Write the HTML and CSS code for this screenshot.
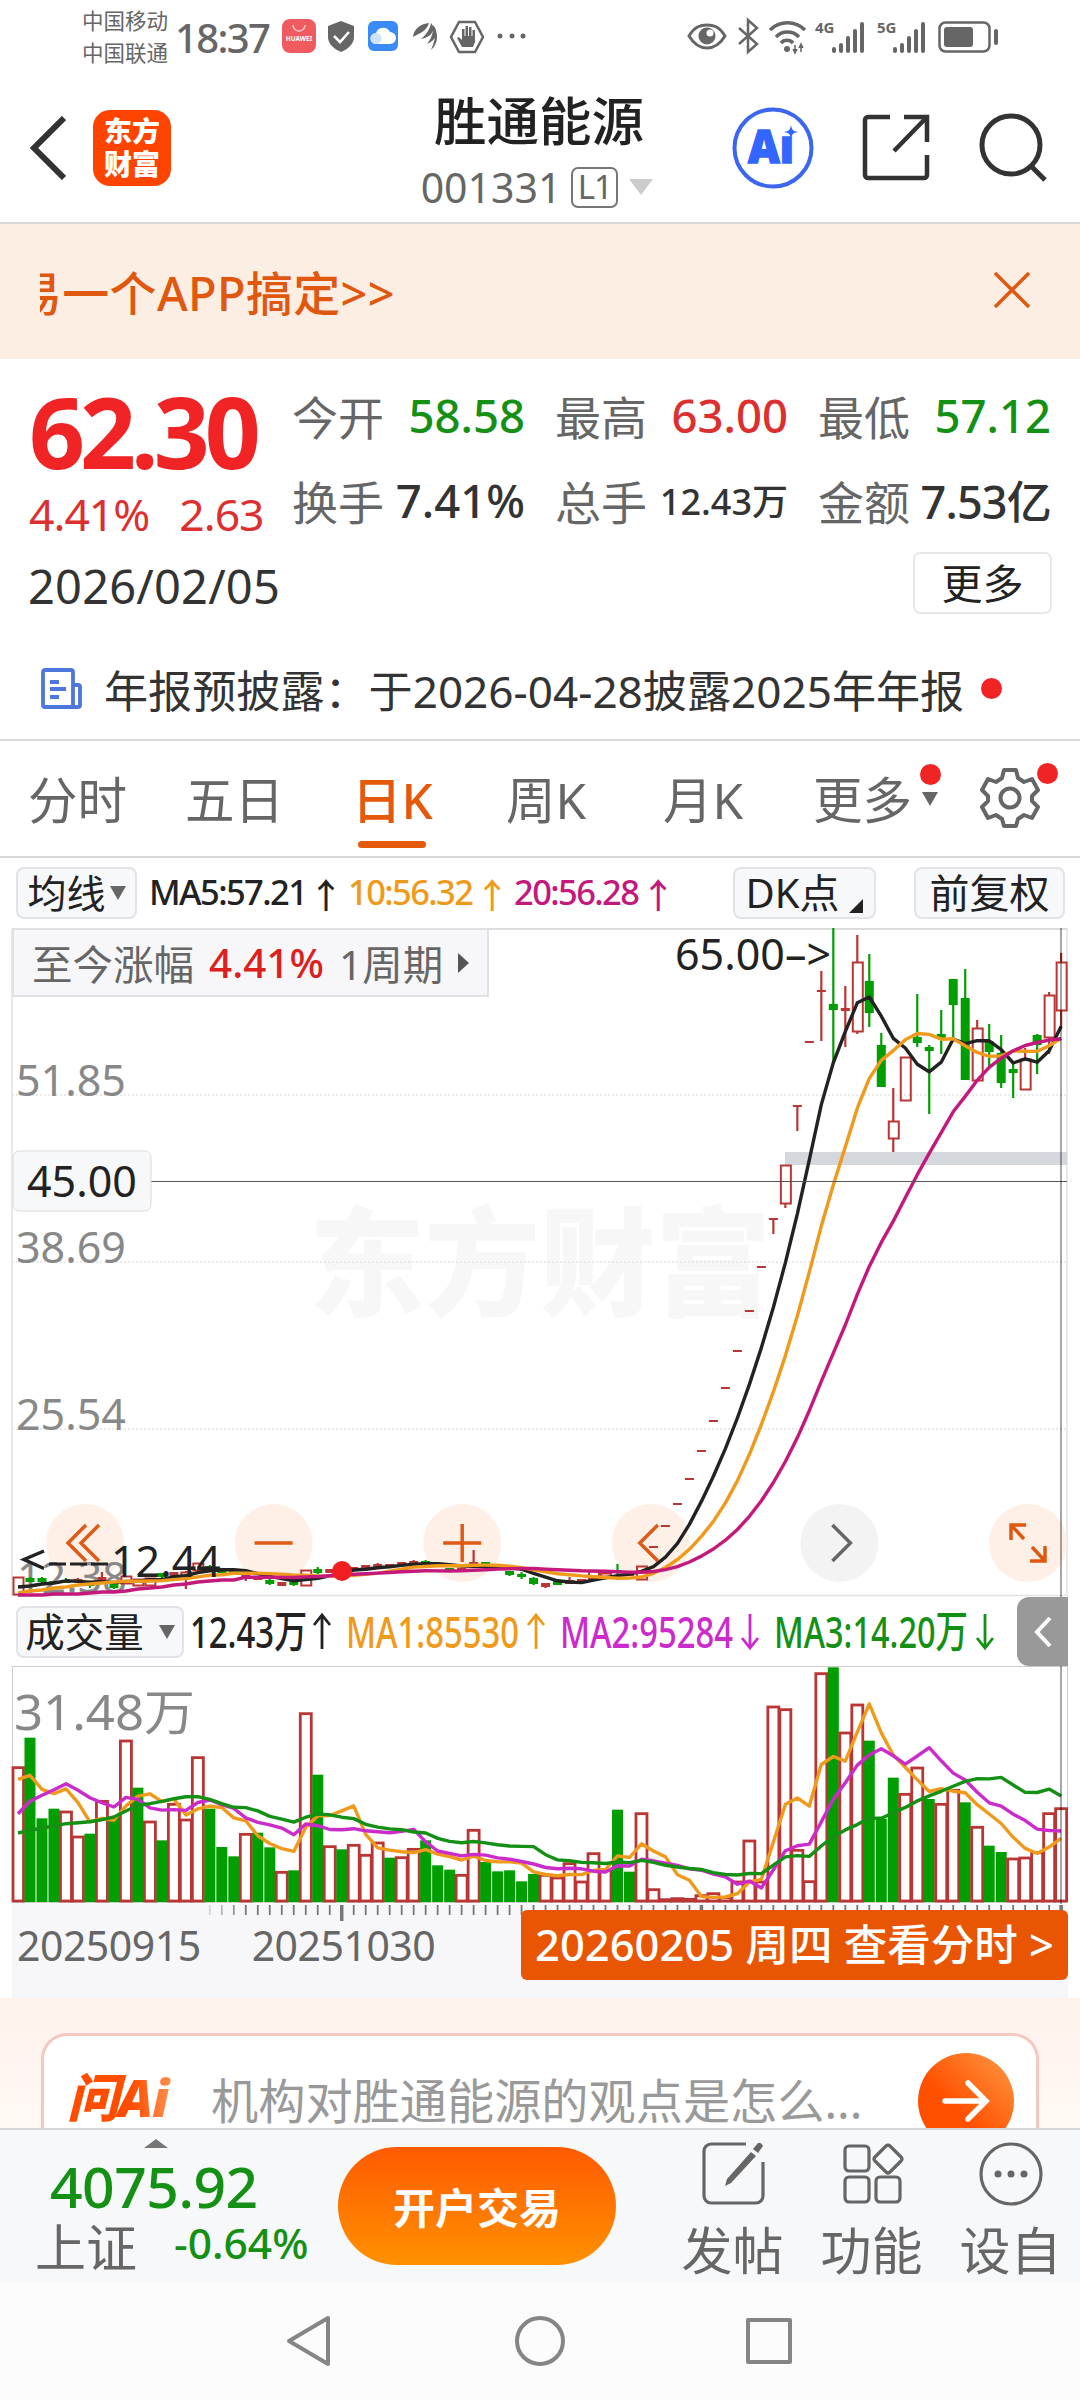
FILE: index.html
```html
<!DOCTYPE html>
<html lang="zh-CN">

<head>
    <meta charset="UTF-8" />
    <meta name="viewport" content="width=device-width, initial-scale=1.0" />
    <title>胜通能源 001331</title>
    <link rel="stylesheet" href="styles.css">
</head>

<body>
    <!-- 状态栏 -->
    <div class="status">
        <div class="carrier">
            <p>中国移动</p>
            <p>中国联通</p>
        </div>
        <span class="time">18:37</span>
        <svg class="status-left" width="250" height="40" viewBox="0 0 250 40">
            <rect x="3" y="3" width="34" height="34" rx="8" fill="#ef5b5f" />
            <path d="M14 9a6 6 0 0 0 12 0" fill="none" stroke="#fbc5c5" stroke-width="1.5" />
            <text x="20" y="25" font-size="6.5" font-weight="700" fill="#fff" text-anchor="middle">HUAWEI</text>
            <path d="M62 5l13 5v11c0 7-6 12-13 15-7-3-13-8-13-15V10z" fill="#666" />
            <path d="M55 20l6 6 9-10" fill="none" stroke="#fff" stroke-width="2.6" />
            <rect x="89" y="5" width="30" height="30" rx="6" fill="#3a8bf7" />
            <path d="M97 28a5.500 5.500 0 0 1 0-11 7.500 7.500 0 0 1 14-1 6 6 0 0 1 0 12z" fill="#fff" />
            <circle cx="97" cy="22.500" r="5.500" fill="#cfe2fd" />
            <path d="M134 21c1-9 8-13 16-14-2 7-8 10-16 14zM142 23c5-4 9-10 10-16 5 5 2 14-10 16zM148 28c4-5 7-12 6-19 6 6 4 15-6 19zM152 34c3-7 5-14 4-21 4 7 2 16-4 21z" fill="#666" />
            <path d="M180 6h16l8 15-8 15h-16l-8-15z" fill="none" stroke="#666" stroke-width="2.500" />
            <path d="M183 31l-5-9 2-1 3 3V13h2.500v7h1V10h2.500v10h1V11h2.500v9h1v-6h2.500v12l-2 5z" fill="#666" />
            <g fill="#666">
                <circle cx="221" cy="20" r="2.500" />
                <circle cx="233" cy="20" r="2.500" />
                <circle cx="244" cy="20" r="2.500" />
            </g>
        </svg>
        <svg class="status-right" width="314" height="40" viewBox="0 0 314 40">
            <g fill="none" stroke="#666" stroke-width="3">
                <path d="M3 20C9 10 15 9 21 9s12 1 18 11C33 30 27 32 21 32S9 30 3 20z" />
                <path d="M53 12l18 16-9 8V4l9 8-18 16" stroke-width="2.500" />
                <path d="M84 14a25 25 0 0 1 35 0M90 21a16 16 0 0 1 23 0M95 27a8 8 0 0 1 12 0" stroke-width="3.500" />
                <rect x="253.500" y="6.500" width="50" height="29" rx="6" stroke-width="2.500" />
            </g>
            <circle cx="21" cy="20" r="8.500" fill="#666" />
            <circle cx="24" cy="17" r="3.500" fill="#fff" />
            <circle cx="101" cy="33" r="3" fill="#666" />
            <path d="M109 29v8M115 28v8M107 33l2 4 2-4M113 32l2-4 2 4" stroke="#666" stroke-width="1.500" fill="#666" />
            <text x="129" y="17" class="net">4G</text>
            <text x="191" y="17" class="net">5G</text>
            <g fill="#666">
                <rect x="146" y="31" width="4" height="6" rx="2" />
                <rect x="153" y="27" width="4" height="10" rx="2" />
                <rect x="160" y="20" width="4" height="17" rx="2" />
                <rect x="167" y="13" width="4" height="24" rx="2" />
                <rect x="174" y="6" width="4" height="31" rx="2" />
                <rect x="207" y="31" width="4" height="6" rx="2" />
                <rect x="214" y="27" width="4" height="10" rx="2" />
                <rect x="221" y="20" width="4" height="17" rx="2" />
                <rect x="228" y="13" width="4" height="24" rx="2" />
                <rect x="235" y="6" width="4" height="31" rx="2" />
                <rect x="258" y="11" width="29" height="20" rx="3" />
                <rect x="308" y="13" width="4" height="16" rx="2" />
            </g>
        </svg>
    </div>

    <!-- 顶部标题 -->
    <header class="header">
        <div class="header-left">
            <svg width="36" height="64" viewBox="0 0 36 64">
                <path d="M34 2L4 32l30 30" fill="none" stroke="#333" stroke-width="6" />
            </svg>
            <div class="logo">东方<br>财富</div>
        </div>
        <div class="header-title">
            <h1>胜通能源</h1>
            <div class="code">001331<span class="level">L1</span><i class="arrow"></i></div>
        </div>
        <div class="header-right">
            <svg width="82" height="82" viewBox="0 0 82 82">
                <circle cx="41" cy="41" r="38.500" fill="none" stroke="#3c66ef" stroke-width="4" />
                <text x="16" y="56" class="ai-text" textLength="46" lengthAdjust="spacingAndGlyphs">Aı</text>
                <path d="M59 18c1 5 2 6 7 7-5 1-6 2-7 7-1-5-2-6-7-7 5-1 6-2 7-7z" fill="#3366ff" />
            </svg>
            <svg width="68" height="68" viewBox="0 0 68 68">
                <path d="M28 3H6a3 3 0 0 0-3 3v55a3 3 0 0 0 3 3h56a3 3 0 0 0 3-3V41M42 3h23v25M65 3L32 37" fill="none" stroke="#333" stroke-width="4.500" />
            </svg>
            <svg width="70" height="70" viewBox="0 0 70 70">
                <circle cx="33" cy="32" r="29" fill="none" stroke="#333" stroke-width="5" />
                <path d="M53 53l14 14" stroke="#333" stroke-width="5" />
            </svg>
        </div>
    </header>

    <div class="banner">
        <div class="banner-text"><p>易一个APP搞定&gt;&gt;</p></div>
        <svg width="38" height="38" viewBox="0 0 38 38">
            <path d="M2 2l34 34M36 2L2 36" stroke="#e0580f" stroke-width="3.500" />
        </svg>
    </div>

    <!-- 行情 -->
    <section class="quote">
        <div class="quote-main">
            <div class="price">62.30</div>
            <div class="change"><span>4.41%</span><span>2.63</span></div>
        </div>
        <ul class="quote-list">
            <li><em>今开</em><b class="down">58.58</b></li>
            <li><em>最高</em><b class="up">63.00</b></li>
            <li><em>最低</em><b class="down">57.12</b></li>
            <li><em>换手</em><b>7.41%</b></li>
            <li><em>总手</em><b class="small">12.43万</b></li>
            <li><em>金额</em><b class="tight">7.53亿</b></li>
        </ul>
    </section>
    <div class="date-row">
        <span>2026/02/05</span>
        <button class="more">更多</button>
    </div>
    <div class="notice">
        <svg width="42" height="42" viewBox="0 0 42 42">
            <g fill="none" stroke="#4d77dd" stroke-width="3.800">
                <path d="M32 39H4a2 2 0 0 1-2-2V4a2 2 0 0 1 2-2h26a2 2 0 0 1 2 2v35h5a2 2 0 0 0 2-2V19a2 2 0 0 0-2-2h-5" />
                <path d="M9 14h9M9 21h16M9 29h9" />
            </g>
        </svg>
        <p>年报预披露：于2026-04-28披露2025年年报</p>
        <i class="dot"></i>
    </div>

    <nav class="tabs">
        <span>分时</span>
        <span>五日</span>
        <span class="active">日K</span>
        <span>周K</span>
        <span>月K</span>
        <span class="tab-more">更多<i class="dot"></i><i class="arrow"></i></span>
        <span class="tab-set">
            <svg width="60" height="62" viewBox="0 0 60 62">
                <path d="M24 3h12l2 8 6 4 8-3 6 11-6 6v5l6 6-6 11-8-3-6 4-2 7H24l-2-7-6-4-8 3-6-11 6-6v-5l-6-6 6-11 8 3 6-4z" fill="none" stroke="#666" stroke-width="4" stroke-linejoin="round" />
                <circle cx="30" cy="31" r="9.500" fill="none" stroke="#666" stroke-width="4" />
            </svg>
            <i class="dot"></i>
        </span>
    </nav>

    <div class="ma-bar">
        <button class="chip chip-ma">均线<i class="arrow"></i></button>
        <p class="ma-list">
            <span class="ma5">MA5:57.21<i>↑</i></span>
            <span class="ma10">10:56.32<i>↑</i></span>
            <span class="ma20">20:56.28<i>↑</i></span>
        </p>
        <button class="chip chip-dk">DK点<i class="corner"></i></button>
        <button class="chip chip-fq">前复权</button>
    </div>

    <!-- K线图 -->
    <div class="kline">
        <svg id="kline" width="1080" height="669" viewBox="0 0 1080 669"></svg>
        <div class="range-tip">至今涨幅 <b>4.41%</b> 1周期<i></i></div>
    </div>

    <div class="vol-bar">
        <button class="chip chip-vol">成交量<i class="arrow"></i></button>
        <svg class="vol-legend" width="820" height="70" viewBox="0 0 820 70">
            <g font-size="44" font-weight="500">
                <text x="1" y="51" textLength="117" lengthAdjust="spacingAndGlyphs" fill="#222">12.43万</text>
                <text x="157" y="51" textLength="173" lengthAdjust="spacingAndGlyphs" fill="#f09a1c">MA1:85530</text>
                <text x="371" y="51" textLength="173" lengthAdjust="spacingAndGlyphs" fill="#cc2bcc">MA2:95284</text>
                <text x="585" y="51" textLength="194" lengthAdjust="spacingAndGlyphs" fill="#149014">MA3:14.20万</text>
            </g>
            <g fill="none" stroke-width="2.800">
                <path d="M133 52V18M125 28l8-10 8 10" stroke="#222" />
                <path d="M347 52V18M339 28l8-10 8 10" stroke="#f09a1c" />
                <path d="M561 17v34M553 41l8 10 8-10" stroke="#cc2bcc" />
                <path d="M796 17v34M788 41l8 10 8-10" stroke="#149014" />
            </g>
        </svg>
        <span class="handle">
            <svg width="20" height="34" viewBox="0 0 20 34">
                <path d="M17 3L4 17l13 14" fill="none" stroke="#fff" stroke-width="4" />
            </svg>
        </span>
    </div>

    <!-- 成交量图 -->
    <svg id="volume" width="1080" height="238" viewBox="0 0 1080 238"></svg>
    <div class="axis">
        <svg id="ticks" width="1056" height="20" viewBox="12 0 1056 20"></svg>
        <div class="axis-dates">
            <span>20250915</span>
            <span>20251030</span>
        </div>
        <div class="axis-tag">20260205 周四 查看分时 &gt;</div>
    </div>

    <section class="ask">
        <div class="ask-card">
            <span class="ask-logo">问Ai</span>
            <p>机构对胜通能源的观点是怎么...</p>
            <span class="ask-go">
                <svg width="50" height="44" viewBox="0 0 50 44">
                    <path d="M4 22h40M27 4l18 18-18 18" fill="none" stroke="#fff" stroke-width="5.500" stroke-linecap="round" />
                </svg>
            </span>
        </div>
    </section>

    <footer class="footer">
        <div class="index">
            <i class="arrow-up"></i>
            <div class="index-num">4075.92</div>
            <div class="index-name"><span>上证</span><b>-0.64%</b></div>
        </div>
        <button class="open">开户交易</button>
        <ul class="tools">
            <li>
                <svg width="64" height="66" viewBox="0 0 64 66">
                    <path d="M45 4H10a7 7 0 0 0-7 7v45a7 7 0 0 0 7 7h45a7 7 0 0 0 7-7V22" fill="none" stroke="#666" stroke-width="3.200" />
                    <path d="M52 9l5-6q3-1 5 3l-5 7zM50 12l5 4-25 27-6 3 2-7z" fill="#666" />
                </svg>
                <span>发帖</span>
            </li>
            <li>
                <svg width="64" height="66" viewBox="0 0 64 66">
                    <g fill="none" stroke="#666" stroke-width="3.200">
                        <rect x="5" y="6" width="24" height="25" rx="4" />
                        <rect x="5" y="37" width="24" height="25" rx="4" />
                        <rect x="36" y="37" width="24" height="25" rx="4" />
                        <path d="M46 6q2-2 4 0l11 11q2 2 0 4L50 32q-2 2-4 0L35 21q-2-2 0-4z" />
                    </g>
                </svg>
                <span>功能</span>
            </li>
            <li>
                <svg width="64" height="66" viewBox="0 0 64 66">
                    <circle cx="32" cy="34" r="30" fill="none" stroke="#666" stroke-width="3.200" />
                    <g fill="#666">
                        <circle cx="19" cy="34" r="3.500" />
                        <circle cx="32" cy="34" r="3.500" />
                        <circle cx="45" cy="34" r="3.500" />
                    </g>
                </svg>
                <span>设自</span>
            </li>
        </ul>
    </footer>

    <div class="sysnav">
        <svg width="560" height="60" viewBox="260 0 560 60">
            <g fill="none" stroke="#858585" stroke-width="4" stroke-linejoin="round">
                <path d="M328 7v46L289 30z" />
                <circle cx="540" cy="30" r="23" />
                <rect x="748" y="9" width="42" height="42" />
            </g>
        </svg>
    </div>

    <script>
        const RED = '#b93634'
        const GREEN = '#009e00'
        const STEP = 11.99
        const X0 = 18

        // [最高, 实体上沿, 实体下沿, 最低, 阳线, 成交量, 量柱颜色]
        const data = [
            [649, 649, 666, 666, 1, 403, 1], [649, 651, 653, 654, 0, 493, 0], [649, 651, 653, 655, 0, 251, 0], [653, 654, 655, 656, 0, 280, 0],
            [650, 653, 654, 655, 0, 270, 1], [650, 652, 653, 654, 1, 195, 1], [655, 656, 657, 660, 0, 205, 0], [644, 650, 652, 653, 1, 302, 1],
            [654, 655, 660, 661, 0, 255, 0], [648, 648, 655, 655, 1, 483, 1], [651, 651, 657, 657, 1, 343, 0], [650, 650, 657, 657, 1, 240, 1],
            [645, 645, 649, 650, 0, 185, 0], [645, 645, 647, 648, 1, 293, 1], [643, 644, 648, 661, 1, 246, 1], [635, 635, 642, 642, 1, 433, 1],
            [637, 639, 641, 642, 0, 280, 0], [641, 642, 644, 645, 0, 165, 0], [644, 644, 645, 646, 0, 137, 0], [648, 648, 649, 653, 1, 203, 1],
            [650, 650, 651, 652, 1, 208, 0], [651, 653, 655, 657, 0, 164, 0], [655, 655, 657, 658, 1, 89, 1], [654, 655, 656, 658, 0, 95, 0],
            [642, 642, 657, 657, 1, 565, 1], [639, 642, 644, 646, 0, 382, 0], [641, 642, 644, 645, 1, 166, 1], [641, 642, 643, 645, 1, 158, 0],
            [640, 640, 641, 642, 1, 170, 1], [638, 638, 639, 640, 1, 140, 1], [635, 637, 638, 639, 1, 177, 1], [637, 637, 638, 639, 1, 133, 0],
            [635, 635, 637, 637, 1, 133, 1], [632, 634, 635, 636, 1, 158, 1], [632, 634, 636, 637, 0, 185, 0], [636, 636, 637, 638, 0, 110, 0],
            [640, 641, 642, 643, 0, 97, 0], [640, 641, 642, 642, 1, 80, 1], [622, 635, 637, 637, 1, 215, 1], [635, 635, 637, 638, 0, 120, 0],
            [636, 637, 638, 639, 0, 92, 0], [643, 643, 647, 648, 0, 95, 0], [644, 646, 649, 651, 0, 62, 0], [649, 650, 656, 657, 0, 84, 0],
            [655, 656, 658, 660, 1, 80, 1], [654, 654, 656, 656, 0, 72, 1], [649, 653, 655, 655, 1, 115, 1], [652, 652, 654, 655, 1, 60, 1],
            [643, 643, 650, 650, 1, 145, 1], [645, 645, 648, 649, 1, 95, 1], [636, 642, 645, 647, 0, 277, 0], [646, 646, 647, 648, 1, 91, 0],
            [638, 638, 651, 652, 1, 265, 1], [619, 619, 619, 619, 1, 37, 1], [598, 598, 598, 598, 1, 7, 1], [576, 576, 576, 576, 1, 10, 1],
            [551, 551, 551, 551, 1, 8, 1], [523, 523, 523, 523, 1, 19, 1], [493, 493, 493, 493, 1, 25, 1], [460, 460, 460, 460, 1, 13, 1],
            [423, 423, 423, 423, 1, 60, 1], [383, 383, 383, 383, 1, 183, 1], [339, 339, 339, 339, 1, 60, 1], [291, 291, 291, 306, 1, 585, 1],
            [237, 237, 275, 280, 1, 577, 1], [178, 178, 178, 203, 1, 155, 1], [114, 114, 114, 114, 1, 61, 1], [43, 63, 63, 113, 1, 685, 1],
            [0, 76, 82, 135, 0, 704, 0], [58, 81, 82, 119, 1, 507, 1], [7, 34, 103, 106, 1, 591, 1], [26, 53, 85, 99, 0, 484, 0],
            [105, 117, 159, 159, 0, 250, 0], [160, 193, 210, 224, 1, 373, 0], [129, 129, 172, 172, 1, 323, 1], [66, 109, 115, 119, 0, 402, 1],
            [117, 119, 123, 186, 0, 309, 0], [82, 106, 111, 126, 0, 293, 1], [51, 51, 77, 112, 0, 335, 1], [41, 70, 152, 152, 0, 299, 0],
            [92, 100, 152, 152, 1, 224, 1], [96, 113, 124, 139, 0, 169, 0], [107, 125, 155, 160, 0, 150, 0], [134, 142, 144, 170, 0, 129, 1],
            [120, 131, 161, 161, 1, 132, 1], [106, 107, 117, 146, 0, 148, 1], [64, 67, 109, 126, 1, 265, 1], [25, 34, 82, 99, 1, 280, 1]
        ]

        const x = i => X0 + STEP * i

        // head: 窗口期之前的均线值
        function average(list, n, head) {
            return list.map((v, i) => {
                if (i < head.length) return head[i]
                const part = list.slice(i - n + 1, i + 1)
                return part.reduce((a, b) => a + b, 0) / n
            })
        }

        function line(values, toY, color) {
            const points = values.map((v, i) => `${x(i).toFixed(1)},${toY(v).toFixed(1)}`).join(' ')
            return `<polyline points="${points}" fill="none" stroke="${color}" stroke-width="3.4" stroke-linejoin="round" />`
        }

        function drawKline() {
            let html = '<text x="309" y="379" textLength="462" lengthAdjust="spacingAndGlyphs" class="watermark">东方财富</text>'
            html += '<path d="M12 .5V667.5H1067V.5" fill="none" stroke="#e2e2e2" stroke-width="1.500" /><path d="M12 1H1067" stroke="#dcdcdc" stroke-width="2" />'
            for (const y of [167, 334, 501]) {
                html += `<path d="M12 ${y}H1067" stroke="#e4e4e4" stroke-width="1.500" stroke-dasharray="2 2" />`
            }
            html += '<rect x="785" y="224" width="282" height="13" fill="#d4d7dc" />'

            // 底部操作按钮
            const icons = [
                ['#fff0e7', '#dd5b16', 'M1-18l-18 18 18 18M14-18l-18 18 18 18'],
                ['#fff0e7', '#dd5b16', 'M-19 0h38'],
                ['#fff0e7', '#dd5b16', 'M-19 0h38M0-19v38'],
                ['#fff0e7', '#dd5b16', 'M7-18l-18 18 18 18'],
                ['#f3f3f3', '#666', 'M-7-18l18 18-18 18'],
                ['#fff0e7', '#e0580f', 'M-17-3v-15h15M-17-18l13 14M17 3v15h-15M17 18l-13-14']
            ]
            icons.forEach((item, i) => {
                html += `<g transform="translate(${85 + 188.6 * i} 615)"><circle r="39" fill="${item[0]}" /><path d="${item[2]}" fill="none" stroke="${item[1]}" stroke-width="3.500" /></g>`
            })

            html += '<text x="16" y="168" class="scale">51.85</text><text x="16" y="335" class="scale">38.69</text>'
            html += '<text x="16" y="502" class="scale">25.54</text><text x="17" y="665" class="scale">12.38</text>'

            data.forEach(([high, top, bottom, low, up], i) => {
                const color = up ? RED : GREEN
                const cx = x(i)
                html += `<path d="M${cx} ${high}V${top}M${cx} ${bottom}V${low}" stroke="${color}" stroke-width="2.200" />`
                if (bottom - top < 3) {
                    html += `<path d="M${cx - 4.5} ${(top + bottom) / 2}h9" stroke="${color}" stroke-width="${bottom - top + 2}" />`
                } else if (up) {
                    html += `<rect x="${cx - 4.5}" y="${top + .5}" width="10" height="${bottom - top}" fill="none" stroke="${color}" stroke-width="2" />`
                } else {
                    html += `<rect x="${cx - 4.5}" y="${top}" width="9" height="${bottom - top}" fill="${color}" />`
                }
            })

            const close = data.map(d => d[4] ? d[1] : d[2])
            const same = v => v
            html += line(average(close, 5, [659, 658, 656, 655]), same, '#222')
            html += line(average(close, 10, [665, 663, 662, 660, 659, 657, 656, 655, 654]), same, '#f09a1c')
            html += line(average(close, 20, [667, 667, 667, 666, 666, 666, 665, 664, 664, 663, 661, 660, 659, 657, 656, 654, 653, 652, 652]), same, '#c3187c')

            html += '<circle cx="342" cy="643" r="10" fill="#f02020" />'
            html += '<text x="675" y="42" textLength="156" lengthAdjust="spacingAndGlyphs" class="mark">65.00–&gt;</text>'
            html += '<path d="M44 623l-20 8.500 20 9" fill="none" stroke="#222" stroke-width="3.500" /><path d="M49 636h17M70 636h17M91 636h17" stroke="#222" stroke-width="3" />'
            html += '<text x="111" y="649" class="mark">12.44</text>'

            html += '<path d="M151 253.500H1067" stroke="#555" />'
            html += '<rect x="13" y="223" width="138" height="60" rx="6" fill="#f7f8fa" stroke="#d9dbe0" /><text x="27" y="269" class="mark">45.00</text>'
            html += '<path d="M1061 0V669" stroke="#000" stroke-opacity=".35" stroke-width="2" />'
            document.querySelector('#kline').innerHTML = html
        }

        function drawVolume() {
            const base = 236
            const toY = v => base - v / 3
            let html = '<path d="M12.500 236.500V.5H1067.500V236.500z" fill="none" stroke="#ccc" /><text x="14" y="64" textLength="181" lengthAdjust="spacingAndGlyphs" class="scale scale-vol">31.48万</text>'
            data.forEach((d, i) => {
                const v = d[5]
                if (d[6]) {
                    const left = i ? x(i) - 5.5 : 13
                    html += `<rect x="${left}" y="${toY(v)}" width="${x(i) + 5.5 - left}" height="${Math.max(v / 3 - 1, 1)}" fill="${v > 30 ? '#fff' : 'none'}" stroke="${RED}" stroke-width="2.800" />`
                } else {
                    html += `<rect x="${x(i) - 5.5}" y="${toY(v)}" width="11" height="${v / 3}" fill="${GREEN}" />`
                }
            })
            const vol = data.map(d => d[5])
            html += line(average(vol, 5, [368, 380, 338, 325]), toY, '#f09a1c')
            html += line(average(vol, 10, [265, 302, 320, 337, 355, 335, 313, 298, 285]), toY, '#cc2bcc')
            html += line(average(vol, 20, [207, 215, 222, 228, 235, 238, 241, 247, 255, 273, 290, 295, 302, 310, 316, 316, 308, 295, 284]), toY, '#149014')
            html += '<path d="M1061 0V238" stroke="#000" stroke-opacity=".35" stroke-width="2" />'
            document.querySelector('#volume').innerHTML = html
        }

        function drawTicks() {
            let html = ''
            for (let i = 16; i < data.length; i++) {
                const major = i % 30 === 27
                const opacity = Math.min((i - 15) * .25, 1)
                html += `<path d="M${x(i)} 1v${major ? 16 : 10}" stroke="#777" stroke-opacity="${opacity}" stroke-width="${major ? 3.5 : 1.8}" />`
            }
            document.querySelector('#ticks').innerHTML = html
        }

        drawKline()
        drawVolume()
        drawTicks()
    </script>
</body>

</html>
```
FILE: styles.css
```css
* {
    box-sizing: border-box;
    margin: 0;
    padding: 0;
}

body {
    width: 1080px;
    height: 2400px;
    overflow: hidden;
    background: #fff;
    color: #333;
    font-family: "Noto Sans", "Noto Sans CJK SC", sans-serif;
}

svg {
    display: block;
    flex-shrink: 0;
}

ul {
    list-style: none;
}

i,
em {
    font-style: normal;
}

b {
    font-weight: 500;
}

button {
    font-family: inherit;
    color: #222;
    border: none;
}

.dot {
    width: 21px;
    height: 21px;
    border-radius: 50%;
    background: #f02424;
}

.arrow {
    border: 8px solid transparent;
    border-top: 14px solid #666;
    border-bottom: none;
}

/* 状态栏 */
.status {
    height: 74px;
    padding: 0 80px 0 82px;
    display: flex;
    align-items: center;
    color: #666;
}

.carrier {
    width: 93px;
    font-size: 21.5px;
    line-height: 32px;
    white-space: nowrap;
}

.time {
    width: 104px;
    font-size: 40px;
    font-weight: 500;
    letter-spacing: -1.6px;
}

.status-left,
.status-right {
    margin-bottom: 2px;
}

.status-right {
    margin-left: auto;
}

.net {
    font-size: 15px;
    font-weight: 700;
    fill: #666;
}

/* 顶部 */
.header {
    height: 150px;
    padding: 0 32px 0 30px;
    display: grid;
    grid-template-columns: 1fr 250px 1fr;
    border-bottom: 2px solid #d8d8d8;
}

.header-left {
    display: flex;
    align-items: center;
    gap: 27px;
}

.logo {
    width: 78px;
    height: 76px;
    padding-top: 5px;
    border-radius: 17px;
    background: #ff4400;
    color: #fff;
    font-size: 28px;
    font-weight: 900;
    line-height: 33px;
    text-align: center;
}

.header-title {
    display: flex;
    flex-direction: column;
    align-items: center;
}

.header-title h1 {
    margin-top: 14px;
    font-size: 52.5px;
    font-weight: 500;
    line-height: 66px;
    color: #222;
}

.code {
    display: flex;
    align-items: center;
    height: 66px;
    margin-left: -4px;
    font-size: 41px;
    color: #666;
}

.level {
    width: 47px;
    height: 41px;
    margin: 0 11px 0 10px;
    border: 2px solid #777;
    border-radius: 7px;
    font-size: 33px;
    line-height: 36px;
    text-align: center;
    letter-spacing: -1px;
}

.code .arrow {
    border-width: 16px 12px 0;
    border-top-color: #ccc;
}

.header-right {
    display: flex;
    align-items: center;
    justify-content: flex-end;
    gap: 48px;
}

.ai-text {
    font-size: 46px;
    font-weight: 900;
    fill: #3366ff;
    stroke: #3366ff;
    stroke-width: 1.5px;
}

/* 公告条 */
.banner {
    height: 135px;
    padding: 0 49px 3px 40px;
    display: flex;
    align-items: center;
    justify-content: space-between;
    background: #fdeee4;
}

.banner-text {
    overflow: hidden;
}

.banner-text p {
    margin-left: -25px;
    font-size: 47px;
    letter-spacing: .3px;
    font-weight: 500;
    color: #e0580f;
    white-space: nowrap;
}

/* 行情 */
.quote {
    height: 180px;
    display: flex;
    padding: 13px 30px 0 29px;
}

.quote-main {
    width: 263px;
}

.price {
    height: 117px;
    font-size: 98px;
    font-weight: 700;
    line-height: 118px;
    letter-spacing: -5px;
    color: #f02424;
}

.change {
    display: flex;
    gap: 30px;
    font-size: 44.5px;
    line-height: 50px;
    letter-spacing: -1px;
    color: #dc3030;
}

.quote-list {
    width: 758px;
    display: grid;
    grid-template-columns: repeat(3, 233px);
    column-gap: 30px;
    grid-auto-rows: 85px;
}

.quote-list li {
    display: flex;
    align-items: center;
    justify-content: space-between;
    white-space: nowrap;
}

.quote-list em {
    font-size: 46px;
    color: #666;
}

.quote-list b {
    font-size: 45.5px;
    font-weight: 500;
}

.quote-list .up {
    color: #dc3030;
}

.quote-list .down {
    color: #149014;
}

.quote-list .small {
    font-size: 36px;
}

.quote-list .tight {
    font-size: 45px;
    letter-spacing: -.8px;
}

.date-row {
    height: 89px;
    padding: 4px 28px 0 28px;
    display: flex;
    align-items: center;
    justify-content: space-between;
    font-size: 47px;
    letter-spacing: .2px;
}

.more {
    width: 139px;
    height: 62px;
    margin-top: -5px;
    border: 2px solid #e6e7ea;
    border-radius: 7px;
    background: #fff;
    font-size: 41px;
    line-height: 54px;
}

.notice {
    height: 113px;
    padding: 10px 0 0 41px;
    display: flex;
    align-items: center;
    border-bottom: 2px solid #d8d8d8;
}

.notice p {
    margin: 0 17px 0 21px;
    font-size: 44.1px;
    white-space: nowrap;
}

/* 周期切换 */
.tabs {
    height: 117px;
    padding-left: 28px;
    display: grid;
    grid-template-columns: 157px 167px 154px 157px 150px 167px 1fr;
    align-items: center;
    border-bottom: 2px solid #d8d8d8;
    font-size: 49.5px;
    line-height: 118px;
    color: #666;
}

.tabs span {
    position: relative;
    height: 115px;
}

.tabs .active {
    color: #e5590a;
    font-weight: 500;
}

.tabs .active::after {
    content: "";
    position: absolute;
    left: 6px;
    bottom: 8px;
    width: 68px;
    height: 7px;
    border-radius: 4px;
    background: #e5590a;
}

.tab-more .dot {
    position: absolute;
    left: 107px;
    top: 23px;
}

.tab-more .arrow {
    position: absolute;
    left: 109px;
    top: 51px;
}

.tab-set svg {
    margin-top: 26px;
}

.tab-set .dot {
    position: absolute;
    left: 57px;
    top: 22px;
}

/* 均线 */
.ma-bar {
    height: 70px;
    padding: 0 16px;
    display: flex;
    align-items: center;
}

.chip {
    height: 52px;
    border: 2px solid #e2e3e8;
    border-radius: 8px;
    background: #f7f8fa;
    font-size: 40px;
    line-height: 46px;
    display: flex;
    align-items: center;
    justify-content: center;
    white-space: nowrap;
    flex-shrink: 0;
}

.chip-ma {
    width: 121px;
    font-size: 39px;
}

.chip-ma .arrow {
    margin-left: 4px;
}

.ma-list {
    width: 596px;
    flex-shrink: 0;
    padding-left: 12px;
    display: flex;
    font-size: 34.5px;
    font-weight: 500;
    letter-spacing: -1.6px;
    white-space: nowrap;
}

.ma-list span {
    display: flex;
}

.ma-list i {
    width: 38px;
    display: flex;
    justify-content: center;
}

.ma5 {
    width: 199px;
    color: #222;
}

.ma10 {
    width: 166px;
    color: #f09a1c;
}

.ma20 {
    color: #c3187c;
}

.chip-dk {
    width: 143px;
    margin-right: 38px;
}

.corner {
    margin: 26px 0 0 10px;
    border-left: 14px solid transparent;
    border-bottom: 14px solid #222;
}

.chip-fq {
    width: 151px;
}

/* K线 */
.kline {
    position: relative;
    height: 669px;
}

.range-tip {
    position: absolute;
    left: 12px;
    top: 0;
    width: 477px;
    height: 69px;
    padding-left: 18px;
    display: flex;
    align-items: center;
    gap: 15px;
    border: 2px solid #e0e1e5;
    background: #f7f7fa;
    font-size: 40.5px;
    color: #666;
    white-space: nowrap;
}

.range-tip b {
    color: #dc2020;
    font-weight: 500;
}

.range-tip i {
    border-left: 11px solid #555;
    border-top: 10px solid transparent;
    border-bottom: 10px solid transparent;
}

.watermark {
    font-size: 118px;
    font-weight: 900;
    fill: #f7f7f7;
}

.scale {
    font-size: 43px;
    fill: #888;
}

.scale-vol {
    font-size: 49px;
}

.mark {
    font-size: 43px;
    fill: #222;
}

.vol-bar {
    height: 69px;
    padding: 0 12px 0 16px;
    display: flex;
    align-items: center;
}

.chip-vol {
    width: 168px;
    font-size: 39.5px;
}

.chip-vol .arrow {
    margin-left: 15px;
}

.vol-legend {
    margin-left: 5px;
}

.handle {
    width: 51px;
    height: 69px;
    margin-left: auto;
    display: flex;
    align-items: center;
    justify-content: center;
    border-radius: 12px 0 0 12px;
    background: #999;
}

/* 日期轴 */
.axis {
    position: relative;
    height: 94px;
    margin: 0 12px;
    background: #f7f7fa;
}

.axis-dates {
    display: flex;
    gap: 51px;
    padding-left: 5px;
    font-size: 41px;
    line-height: 42px;
    letter-spacing: -.5px;
    color: #666;
}

.axis-tag {
    position: absolute;
    right: 0;
    top: 6px;
    width: 547px;
    height: 70px;
    border-radius: 6px;
    background: #e95603;
    color: #fff;
    font-size: 43.5px;
    font-weight: 500;
    line-height: 68px;
    text-align: center;
    white-space: nowrap;
}

/* 问Ai */
.ask {
    height: 130px;
    padding: 35px 41px 0;
    overflow: hidden;
    background: linear-gradient(#fff1ec, #fff9f4);
}

.ask-card {
    height: 128px;
    padding: 0 23px;
    display: flex;
    align-items: center;
    border: 3px solid #f4c8c0;
    border-bottom: none;
    border-radius: 26px 26px 0 0;
    background: #fff;
}

.ask-logo {
    width: 144px;
    margin-top: -3px;
    font-size: 52px;
    font-weight: 900;
    line-height: 70px;
    font-style: italic;
    letter-spacing: -1px;
    color: transparent;
    background: linear-gradient(90deg, #ff4d00 45%, #ffa366 80%);
    background-clip: text;
}

.ask-card p {
    font-size: 47.2px;
    color: #999;
    white-space: nowrap;
}

.ask-go {
    width: 96px;
    height: 96px;
    margin: 4px -1px 0 auto;
    display: flex;
    align-items: center;
    justify-content: center;
    border-radius: 50%;
    background: linear-gradient(45deg, #ff5000 40%, #ff9a44);
}

/* 底部 */
.footer {
    height: 154px;
    display: flex;
    border-top: 2px solid #d5d6da;
    background: #f7f8fa;
}

.index {
    width: 338px;
    padding: 9px 0 0 35px;
}

.arrow-up {
    display: block;
    width: 0;
    margin-left: 109px;
    border: 12px solid transparent;
    border-top: none;
    border-bottom: 9px solid #777;
}

.index-num {
    margin: 3px 0 0 15px;
    font-size: 57px;
    font-weight: 500;
    letter-spacing: -.5px;
    line-height: 70px;
    color: #149014;
}

.index-name {
    display: flex;
    align-items: center;
    height: 48px;
    font-size: 51px;
    color: #666;
}

.index-name b {
    margin: -6px 0 0 37px;
    font-size: 42.5px;
    color: #149014;
}

.open {
    width: 278px;
    height: 118px;
    margin-top: 17px;
    padding-bottom: 2px;
    border-radius: 59px;
    background: linear-gradient(#ff5a00, #ff9100);
    color: #fff;
    font-size: 42px;
    font-weight: 700;
}

.tools {
    display: flex;
    padding: 10px 0 0 47px;
}

.tools li {
    width: 139px;
    display: flex;
    flex-direction: column;
    align-items: center;
    font-size: 51px;
    line-height: 88px;
    color: #666;
}

.sysnav {
    height: 118px;
    padding-top: 29px;
    display: flex;
    justify-content: center;
    background: #fcfcfc;
}
```
